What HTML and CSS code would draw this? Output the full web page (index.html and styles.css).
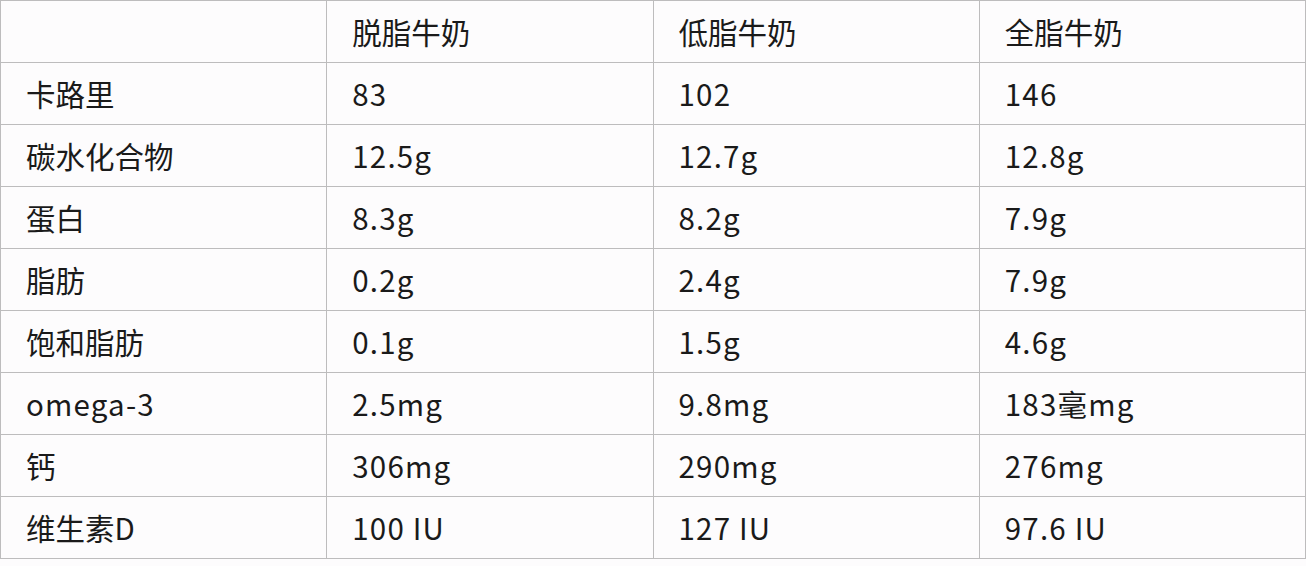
FILE: index.html
```html
<!DOCTYPE html>
<html lang="zh">
<head>
<meta charset="utf-8">
<link rel="stylesheet" href="styles.css">
</head>
<body>
<table class="milk">
  <colgroup><col class="c"><col class="c"><col class="c"><col class="c"></colgroup>
  <tr><td></td><td>脱脂牛奶</td><td>低脂牛奶</td><td>全脂牛奶</td></tr>
  <tr><td>卡路里</td><td class="v">83</td><td class="v">102</td><td class="v">146</td></tr>
  <tr><td>碳水化合物</td><td class="v">12.5g</td><td class="v">12.7g</td><td class="v">12.8g</td></tr>
  <tr><td>蛋白</td><td class="v">8.3g</td><td class="v">8.2g</td><td class="v">7.9g</td></tr>
  <tr><td>脂肪</td><td class="v">0.2g</td><td class="v">2.4g</td><td class="v">7.9g</td></tr>
  <tr><td>饱和脂肪</td><td class="v">0.1g</td><td class="v">1.5g</td><td class="v">4.6g</td></tr>
  <tr><td class="v">omega-3</td><td class="v">2.5mg</td><td class="v">9.8mg</td><td class="v">183毫mg</td></tr>
  <tr><td>钙</td><td class="v">306mg</td><td class="v">290mg</td><td class="v">276mg</td></tr>
  <tr><td>维生素D</td><td class="v">100 IU</td><td class="v">127 IU</td><td class="v">97.6 IU</td></tr>
</table>
</body>
</html>
```
FILE: styles.css
```css
html, body {
  margin: 0;
  padding: 0;
  background: #fdfcfd;
}
body {
  font-family: "Noto Sans CJK SC", "Noto Sans", sans-serif;
  color: #1a1a1a;
}
.milk {
  border-collapse: collapse;
  table-layout: fixed;
  width: 1306px;
}
.milk .c {
  width: 326px;
}
.milk td {
  border: 1px solid #bdbcbd;
  height: 61px;
  padding: 0 0 0 25px;
  font-size: 29.5px;
  font-weight: 400;
  line-height: 1;
  vertical-align: middle;
  white-space: nowrap;
}
.milk td.v {
  letter-spacing: 1.2px;
}
```
